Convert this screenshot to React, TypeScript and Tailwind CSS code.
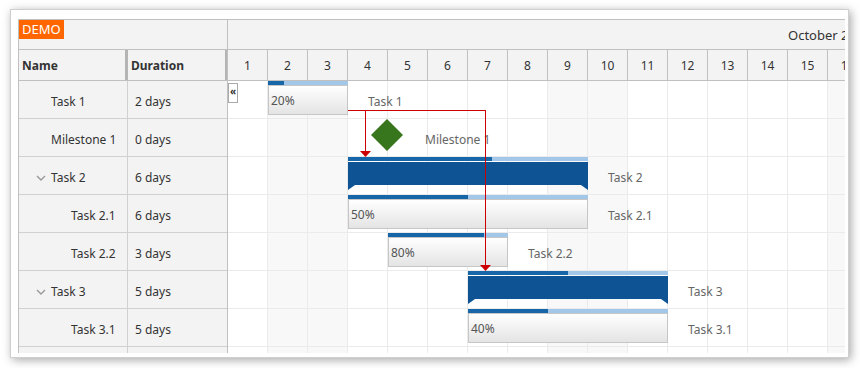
import React from "react"

type Row = {
  name: string
  dur: string
  level: number
  kind: "task" | "group" | "milestone" | "empty"
  start?: number
  days?: number
  pct?: number
}

const rows: Row[] = [
  { name: "Task 1", dur: "2 days", level: 0, kind: "task", start: 2, days: 2, pct: 20 },
  { name: "Milestone 1", dur: "0 days", level: 0, kind: "milestone", start: 5 },
  { name: "Task 2", dur: "6 days", level: 0, kind: "group", start: 4, days: 6, pct: 60 },
  { name: "Task 2.1", dur: "6 days", level: 1, kind: "task", start: 4, days: 6, pct: 50 },
  { name: "Task 2.2", dur: "3 days", level: 1, kind: "task", start: 5, days: 3, pct: 80 },
  { name: "Task 3", dur: "5 days", level: 0, kind: "group", start: 7, days: 5, pct: 50 },
  { name: "Task 3.1", dur: "5 days", level: 1, kind: "task", start: 7, days: 5, pct: 40 },
  { name: "", dur: "", level: 0, kind: "empty" },
]

const days = Array.from({ length: 16 }, (_, i) => i + 1)
const weekend = [2, 3, 9, 10, 16]
const CELL = 40

function Chevron() {
  return (
    <svg width="10" height="6" viewBox="0 0 10 6" className="mr-[5px]">
      <path d="M1 1 L5 5 L9 1" fill="none" stroke="#999" strokeWidth="1.4" />
    </svg>
  )
}

function NameCell({ row }: { row: Row }) {
  const hasChildren = row.kind === "group"
  const pad = row.level === 1 ? "pl-[52px]" : hasChildren ? "pl-[17px]" : "pl-[32px]"
  return (
    <div className={`w-[109px] border-r border-[#d0d0d0] flex items-center pt-[4px] ${pad}`}>
      {hasChildren && <Chevron />}
      <span className="whitespace-nowrap">{row.name}</span>
    </div>
  )
}

function Bar({ row }: { row: Row }) {
  if (row.kind === "empty") return null
  const left = ((row.start ?? 1) - 1) * CELL
  if (row.kind === "milestone") {
    return (
      <>
        <svg width="32" height="32" viewBox="0 0 32 32" className="absolute top-0" style={{ left: left - 17 }}>
          <polygon points="16,0 32,16 16,32 0,16" fill="#38761d" />
        </svg>
        <div className="absolute top-[6px] h-[30px] flex items-center text-[#666] whitespace-nowrap" style={{ left: left + 37 }}>
          {row.name}
        </div>
      </>
    )
  }
  const width = (row.days ?? 0) * CELL
  const pct = row.pct ?? 0
  return (
    <>
      <div className="absolute top-0 h-[4px] bg-[#a2c7e8]" style={{ left, width }}>
        <div className="h-full bg-[#1766a8]" style={{ width: `${pct}%` }} />
      </div>
      {row.kind === "group" ? (
        <div className="absolute top-[5px]" style={{ left, width }}>
          <div className="h-[23px] bg-[#0e5494]" />
          <div className="relative h-[5px]">
            <svg width="7" height="5" viewBox="0 0 7 5" className="absolute left-0 top-0">
              <polygon points="0,0 7,0 0,5" fill="#0e5494" />
            </svg>
            <svg width="7" height="5" viewBox="0 0 7 5" className="absolute right-0 top-0">
              <polygon points="0,0 7,0 7,5" fill="#0e5494" />
            </svg>
          </div>
        </div>
      ) : (
        <div
          className="absolute top-[4px] h-[30px] border border-[#c6c6c6] bg-linear-to-b from-white to-[#e4e4e4] flex items-center pl-[2px] pt-[1px] text-[#555]"
          style={{ left, width }}
        >
          {pct}%
        </div>
      )}
      <div className="absolute top-[6px] h-[30px] flex items-center text-[#666] whitespace-nowrap" style={{ left: left + width + 20 }}>
        {row.name}
      </div>
    </>
  )
}

export default function App() {
  return (
    <div className="w-[860px] h-[368px] bg-white pl-[10px] pt-[9px] text-[12px] text-[#333]" style={{ fontFamily: '"Noto Sans", "Open Sans", sans-serif' }}>
      <div className="w-[839px] h-[349px] border border-[#cfcfcf] bg-white pl-[7px] pt-[9px] pr-[3px] pb-[4px] shadow-[2px_2px_9px_rgba(0,0,0,0.35)] flex">
        <div className="flex-1 flex border-l border-t border-[#c0c0c0] overflow-hidden">
          {/* Left grid */}
          <div className="w-[209px] shrink-0 border-r border-[#c0c0c0] bg-[#f3f3f3] flex flex-col">
            <div className="h-[30px] shrink-0 border-b border-[#c0c0c0]">
              <span className="inline-block bg-[#ff6600] text-white text-[13px] leading-[19px] px-[3px]">DEMO</span>
            </div>
            <div className="h-[31px] shrink-0 border-b border-[#c0c0c0] flex font-bold">
              <div className="w-[109px] relative flex items-center pl-[3px] pt-[2px]">
                Name
                <div className="absolute right-0 top-0 bottom-0 w-[3px] bg-[#b4b4b4]" />
              </div>
              <div className="flex-1 relative flex items-center pl-[3px] pt-[2px]">
                Duration
                <div className="absolute right-0 top-0 bottom-0 w-[2px] bg-[#b4b4b4]" />
              </div>
            </div>
            {rows.map((row, i) => (
              <div key={i} className="h-[38px] shrink-0 border-b border-[#d0d0d0] flex">
                <NameCell row={row} />
                <div className="flex-1 flex items-center pl-[7px] pt-[4px]">{row.dur}</div>
              </div>
            ))}
          </div>

          {/* Timeline */}
          <div className="flex-1 overflow-hidden relative">
            <div className="h-[30px] border-b border-[#c0c0c0] bg-[#f3f3f3] relative">
              <span className="absolute left-[560px] top-[6px] whitespace-nowrap text-[13px]">October 2021</span>
            </div>
            <div className="h-[31px] border-b border-[#c0c0c0] bg-[#f3f3f3] flex">
              {days.map((d) => (
                <div key={d} className="w-[40px] shrink-0 border-r border-[#c0c0c0] flex items-center justify-center pt-[2px]">
                  {d}
                </div>
              ))}
            </div>
            <div className="relative">
              {rows.map((row, i) => (
                <div key={i} className="h-[38px] relative">
                  <div className="absolute inset-0 flex">
                    {days.map((d) => (
                      <div
                        key={d}
                        className={`w-[40px] shrink-0 border-r border-b border-[#ebebeb] ${weekend.includes(d) ? "bg-[#f8f8f8]" : "bg-white"}`}
                      />
                    ))}
                  </div>
                  <Bar row={row} />
                </div>
              ))}

              {/* Links */}
              <svg className="absolute left-0 top-0" width="620" height="300" viewBox="0 0 620 300">
                <g fill="none" stroke="#cc0000" strokeWidth="1" shapeRendering="crispEdges">
                  <path d="M120 29.5 H257.5" />
                  <path d="M137.5 29 V71" />
                  <path d="M257.5 29 V185" />
                </g>
                <polygon points="132,70 143,70 137.5,76" fill="#cc0000" />
                <polygon points="252,184 263,184 257.5,190" fill="#cc0000" />
              </svg>

              {/* Collapse button */}
              <div className="absolute left-0 top-[2px] w-[10px] h-[20px] border border-[#aaa] bg-white text-[10px] font-bold leading-[14px] text-[#333] flex justify-center">
                «
              </div>
            </div>
          </div>
        </div>
      </div>
    </div>
  )
}
